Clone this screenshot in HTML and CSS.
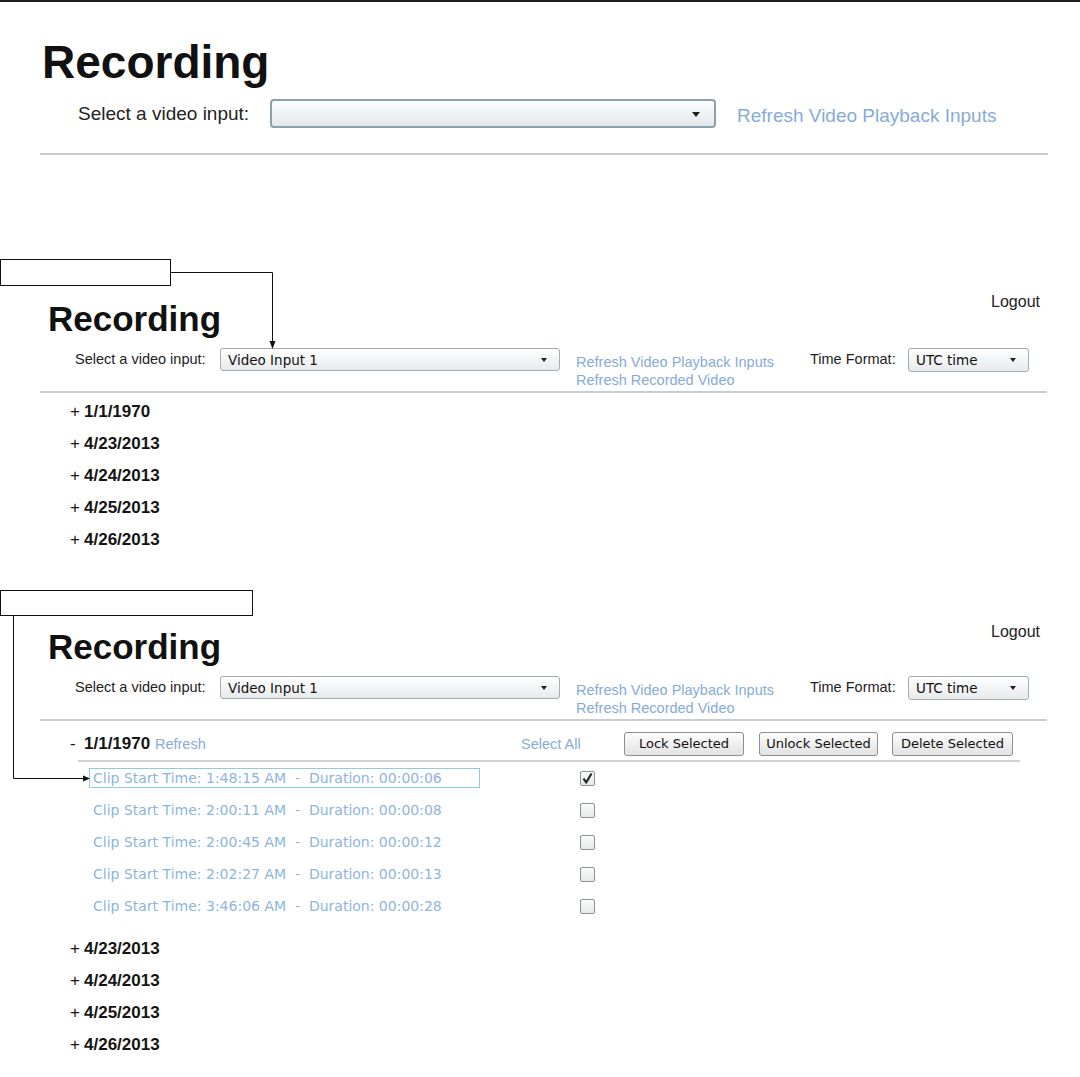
FILE: index.html
```html
<!DOCTYPE html>
<html lang="en">
<head>
    <meta charset="UTF-8">
    <title>Recording - Video Playback</title>
    <link rel="stylesheet" href="styles.css">
</head>
<body>
    <!-- first shot: no input chosen yet -->
    <section class="shot shot-empty">
        <h1 class="title-lg">Recording</h1>
        <div class="input-row-lg">
            <span class="label-lg">Select a video input:</span>
            <div class="select select-lg"><span class="caret"></span></div>
            <a class="link link-lg">Refresh Video Playback Inputs</a>
        </div>
        <div class="rule rule-lg"></div>
    </section>

    <!-- second shot: input chosen, days collapsed -->
    <section class="shot shot-days">
        <div class="callout callout-a"></div>
        <div class="shot-head">
            <h1 class="title">Recording</h1>
            <a class="logout">Logout</a>
        </div>
        <div class="controls">
            <span class="label">Select a video input:</span>
            <div class="select select-input"><span class="select-value">Video Input 1</span><span class="caret"></span></div>
            <div class="links">
                <a class="link">Refresh Video Playback Inputs</a>
                <a class="link">Refresh Recorded Video</a>
            </div>
            <span class="label label-time">Time Format:</span>
            <div class="select select-time"><span class="select-value">UTC time</span><span class="caret"></span></div>
        </div>
        <div class="rule"></div>
        <ul class="days">
            <li><span class="toggle">+</span><b>1/1/1970</b></li>
            <li><span class="toggle">+</span><b>4/23/2013</b></li>
            <li><span class="toggle">+</span><b>4/24/2013</b></li>
            <li><span class="toggle">+</span><b>4/25/2013</b></li>
            <li><span class="toggle">+</span><b>4/26/2013</b></li>
        </ul>
    </section>

    <!-- third shot: one day expanded -->
    <section class="shot shot-clips">
        <div class="callout callout-b"></div>
        <div class="shot-head">
            <h1 class="title">Recording</h1>
            <a class="logout">Logout</a>
        </div>
        <div class="controls">
            <span class="label">Select a video input:</span>
            <div class="select select-input"><span class="select-value">Video Input 1</span><span class="caret"></span></div>
            <div class="links">
                <a class="link">Refresh Video Playback Inputs</a>
                <a class="link">Refresh Recorded Video</a>
            </div>
            <span class="label label-time">Time Format:</span>
            <div class="select select-time"><span class="select-value">UTC time</span><span class="caret"></span></div>
        </div>
        <div class="rule"></div>

        <div class="day-open">
            <div class="day-head">
                <div class="day-title"><span class="toggle">-</span><b>1/1/1970</b> <a class="link">Refresh</a></div>
                <a class="link select-all">Select All</a>
                <button class="btn btn-lock">Lock Selected</button>
                <button class="btn btn-unlock">Unlock Selected</button>
                <button class="btn btn-delete">Delete Selected</button>
            </div>
            <div class="day-rule"></div>
            <ul class="clips">
                <li><span class="clip clip-focus">Clip Start Time: 1:48:15 AM &nbsp;- &nbsp;Duration: 00:00:06</span><span class="check checked"><svg viewBox="0 0 15 15" width="15" height="15"><path d="M3.5 7.5 L6.2 11.5 L11.5 2.5" fill="none" stroke="#262626" stroke-width="2.2" stroke-linejoin="round"/></svg></span></li>
                <li><span class="clip">Clip Start Time: 2:00:11 AM &nbsp;- &nbsp;Duration: 00:00:08</span><span class="check"></span></li>
                <li><span class="clip">Clip Start Time: 2:00:45 AM &nbsp;- &nbsp;Duration: 00:00:12</span><span class="check"></span></li>
                <li><span class="clip">Clip Start Time: 2:02:27 AM &nbsp;- &nbsp;Duration: 00:00:13</span><span class="check"></span></li>
                <li><span class="clip">Clip Start Time: 3:46:06 AM &nbsp;- &nbsp;Duration: 00:00:28</span><span class="check"></span></li>
            </ul>
        </div>
        <ul class="days days-after">
            <li><span class="toggle">+</span><b>4/23/2013</b></li>
            <li><span class="toggle">+</span><b>4/24/2013</b></li>
            <li><span class="toggle">+</span><b>4/25/2013</b></li>
            <li><span class="toggle">+</span><b>4/26/2013</b></li>
        </ul>
    </section>

    <!-- callout leader lines drawn over the shots -->
    <svg class="leaders" width="1080" height="1077" viewBox="0 0 1080 1077">
        <polyline points="171,272.5 272.5,272.5 272.5,342" fill="none" stroke="#111" stroke-width="1"/>
        <polygon points="269.5,341 275.5,341 272.5,349" fill="#111"/>
        <polyline points="13.5,616 13.5,778.5 84,778.5" fill="none" stroke="#111" stroke-width="1"/>
        <polygon points="83,775.5 83,781.5 90,778.5" fill="#111"/>
    </svg>
</body>
</html>
```

FILE: styles.css
```css
body {
    margin: 0;
    width: 1080px;
    height: 1077px;
    overflow: hidden;
    position: relative;
    font-family: "Liberation Sans", Arial, sans-serif;
    color: #1b1b1b;
    background-color: #fff;
}

a {
    cursor: pointer;
}

.link {
    color: #86abd9;
    text-decoration: none;
}

/* first shot */

.shot-empty {
    border-top: 2px solid #1e1e1e;
    padding-top: 34px;
}

.title-lg {
    margin: 0 0 11px 42px;
    font-size: 46px;
    line-height: 52px;
    font-weight: bold;
    color: #111;
}

.input-row-lg {
    display: flex;
    align-items: center;
    height: 29px;
    padding-left: 78px;
}

.label-lg {
    width: 192px;
    font-size: 19px;
    color: #222;
}

.select {
    position: relative;
    box-sizing: border-box;
    display: flex;
    align-items: center;
}

.select-lg {
    width: 446px;
    height: 29px;
    border: 2px solid #8aa1ab;
    border-radius: 4px;
    background: linear-gradient(#fcfdfd, #e2e8eb);
}

.select-lg .caret {
    right: 14px;
    border-left-width: 4px;
    border-right-width: 4px;
    border-top-width: 5px;
}

.link-lg {
    margin: 5px 0 0 21px;
    font-size: 19px;
}

.rule {
    margin: 2px 33px 0 40px;
    border-top: 2px solid #c9ccce;
}

.rule-lg {
    margin: 25px 32px 0 40px;
}

/* shared pieces of the second and third shots */

.callout {
    box-sizing: border-box;
    border: 1px solid #111;
    background-color: #fff;
}

.callout-a {
    margin-top: 104px;
    width: 171px;
    height: 27px;
}

.callout-b {
    margin-top: 35px;
    width: 253px;
    height: 26px;
}

.shot-head {
    display: flex;
    justify-content: space-between;
    align-items: flex-start;
    margin: 6px 40px 0 48px;
}

.title {
    margin: 7px 0 0;
    font-size: 35px;
    line-height: 40px;
    font-weight: bold;
    color: #111;
}

.shot-clips .title {
    margin-top: 5px;
}

.logout {
    font-size: 16px;
    line-height: 20px;
    color: #222;
}

.controls {
    display: flex;
    align-items: flex-start;
    margin-top: 9px;
    padding-left: 75px;
}

.label {
    width: 145px;
    font-size: 14.5px;
    line-height: 23px;
    color: #222;
}

.label-time {
    width: 98px;
}

.select-input,
.select-time {
    border: 1px solid #a3acb1;
    border-radius: 3px;
    background: linear-gradient(#ffffff, #e7eaec);
    font-family: "DejaVu Sans", Verdana, sans-serif;
    font-size: 13.5px;
    color: #111;
}

.select-input {
    width: 340px;
    height: 23px;
}

.select-time {
    width: 121px;
    height: 24px;
}

.select-value {
    padding-left: 7px;
}

.caret {
    position: absolute;
    right: 12px;
    top: 50%;
    margin-top: -2px;
    width: 0;
    height: 0;
    border-style: solid;
    border-color: #1e1e1e transparent transparent transparent;
    border-width: 4px 3.5px 0 3.5px;
}

.links {
    display: flex;
    flex-direction: column;
    width: 234px;
    margin: 5px 0 0 16px;
    font-size: 14.5px;
    line-height: 18px;
}

/* day lists */

.days {
    list-style: none;
    margin: 2px 0 0;
    padding: 0 0 0 70px;
}

.days li {
    height: 32px;
    line-height: 33px;
    font-size: 17px;
    color: #151515;
}

.toggle {
    display: inline-block;
    width: 14px;
    font-weight: normal;
}

.days-after {
    margin-top: 10px;
}

.day-open {
    margin-top: 6px;
}

.day-head {
    display: flex;
    align-items: center;
    height: 33px;
    padding-left: 70px;
}

.day-title {
    width: 451px;
    font-size: 17px;
    color: #151515;
}

.day-title .link {
    font-size: 14.5px;
}

.select-all {
    width: 103px;
    font-size: 14.5px;
}

.btn {
    box-sizing: border-box;
    height: 24px;
    padding: 0;
    border: 1px solid #8e8e8e;
    border-radius: 3px;
    background: linear-gradient(#fdfdfd, #e2e2e2);
    font-family: "DejaVu Sans", Verdana, sans-serif;
    font-size: 13px;
    color: #111;
}

.btn-lock {
    width: 120px;
}

.btn-unlock {
    width: 119px;
    margin-left: 15px;
}

.btn-delete {
    width: 121px;
    margin-left: 14px;
}

.day-rule {
    margin: 0 60px 0 78px;
    border-top: 2px solid #cfd1d3;
}

.clips {
    list-style: none;
    margin: 0;
    padding: 0 0 0 89px;
}

.clips li {
    display: flex;
    align-items: center;
    height: 32px;
}

.clip {
    box-sizing: border-box;
    width: 391px;
    height: 20px;
    padding-left: 3px;
    border: 1px solid transparent;
    font-family: "DejaVu Sans", Verdana, sans-serif;
    font-size: 14px;
    line-height: 18px;
    color: #8db5e2;
    white-space: nowrap;
}

.clip-focus {
    border-color: #8fcbd9;
}

.check {
    box-sizing: border-box;
    width: 15px;
    height: 15px;
    margin-left: 100px;
    border: 1px solid #8f9296;
    border-radius: 2px;
    background: linear-gradient(#fafafa, #e6e8ea);
}

.check svg {
    display: block;
    margin: -1px 0 0 -1px;
}

.leaders {
    position: absolute;
    top: 0;
    left: 0;
    pointer-events: none;
}
```
